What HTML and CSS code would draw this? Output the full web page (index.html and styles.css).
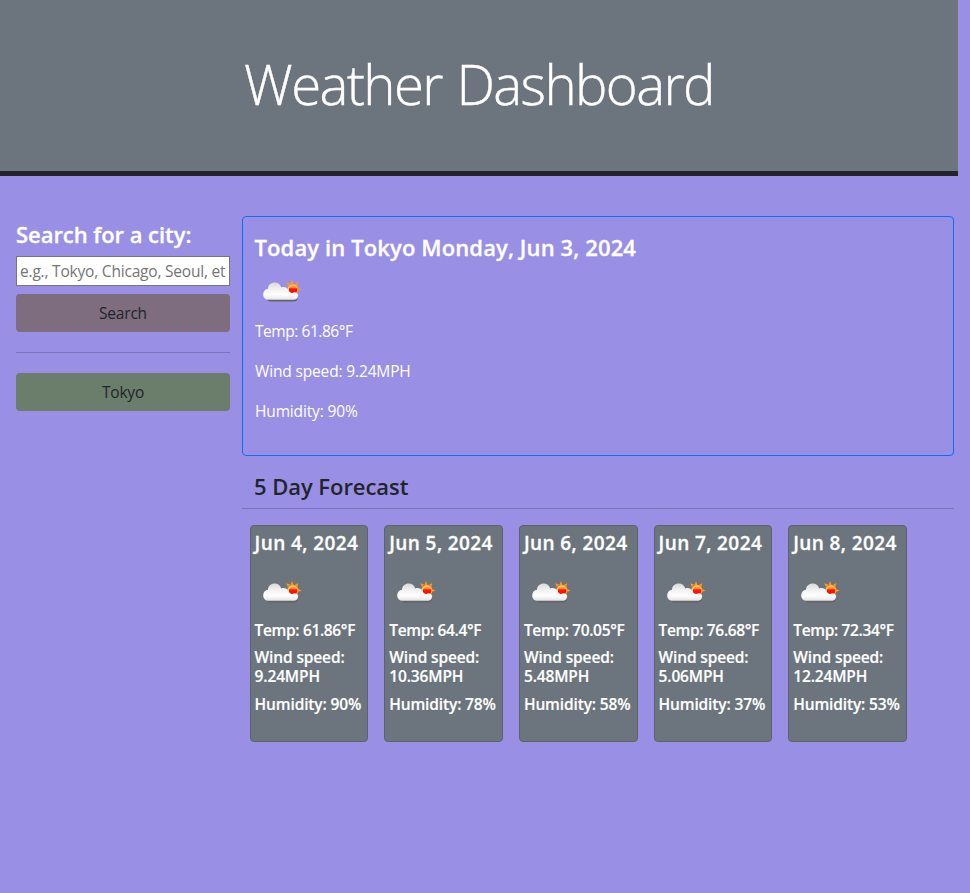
FILE: index.html
```html
<!DOCTYPE html>
<html lang="en">
<head>
<meta charset="utf-8">
<title>Weather Dashboard</title>
<link rel="stylesheet" href="styles.css">
</head>
<body>
<svg width="0" height="0" class="defs" aria-hidden="true">
  <defs>
    <linearGradient id="cloud" x1="0" y1="0" x2="0" y2="1">
      <stop offset="0" stop-color="#dadada"/><stop offset=".35" stop-color="#f0f0f0"/><stop offset=".7" stop-color="#fff"/><stop offset="1" stop-color="#e2e2e2"/>
    </linearGradient>
    <linearGradient id="sun" x1="0" y1="0" x2="0" y2="1">
      <stop offset="0" stop-color="#ffb347"/><stop offset=".25" stop-color="#ff8a2c"/><stop offset=".42" stop-color="#ff1a00"/><stop offset="1" stop-color="#f00"/>
    </linearGradient>
    <symbol id="weather" viewBox="0 0 50 50">
      <path fill="#ff9b16" d="M33 14l1.500 4h-3zM39.300 16l-1 4-2.500-2zM42.700 23.500l-4 1.500v-3zM39.600 29.800l-3.500-1.300 2.300-2.300zM27.200 16.300l4 1.200-2.200 2.500z"/>
      <circle cx="33.800" cy="23.300" r="5.600" fill="#ff9b16"/>
      <circle cx="33.800" cy="23.500" r="4.900" fill="#ffd28a"/>
      <circle cx="34.100" cy="23.600" r="4.300" fill="url(#sun)"/>
      <rect x="8" y="28" width="30.500" height="7.500" rx="3.500" fill="#646266"/>
      <path fill="url(#cloud)" d="M10 33.800C6.500 33.800 4.200 31.600 4.200 28.400c0-3.100 2-5.300 4.800-5.700C9.200 19 12 16.600 15.700 16.600c3.100 0 5.600 1.800 6.500 4.800 3.600-1 7.300.5 8.300 4.700 1.300 1 2.800 1.100 4.500.2 2.500-.2 4 1.300 4 3.300 0 2.700-1.500 4.200-4.300 4.200z"/>
    </symbol>
  </defs>
</svg>
<header class="page-header"><h1>Weather Dashboard</h1></header>
<main class="layout">
  <aside class="sidebar">
    <h2 class="search-title">Search for a city:</h2>
    <input class="city-input" type="text" placeholder="e.g., Tokyo, Chicago, Seoul, etc.">
    <button class="btn btn-search">Search</button>
    <hr>
    <button class="btn btn-city">Tokyo</button>
  </aside>
  <section class="content">
    <div class="today">
      <h2>Today in Tokyo Monday, Jun 3, 2024</h2>
      <svg class="icon"><use href="#weather"/></svg>
      <p class="temp">Temp: 61.86°F</p>
      <p class="wind">Wind speed: 9.24MPH</p>
      <p class="humidity">Humidity: 90%</p>
    </div>
    <h2 class="forecast-title">5 Day Forecast</h2>
    <div class="forecast">
      <article class="card"><h3>Jun 4, 2024</h3><svg class="icon"><use href="#weather"/></svg><p class="temp">Temp: 61.86°F</p><p>Wind speed: 9.24MPH</p><p>Humidity: 90%</p></article>
      <article class="card"><h3>Jun 5, 2024</h3><svg class="icon"><use href="#weather"/></svg><p class="temp">Temp: 64.4°F</p><p>Wind speed: 10.36MPH</p><p>Humidity: 78%</p></article>
      <article class="card"><h3>Jun 6, 2024</h3><svg class="icon"><use href="#weather"/></svg><p class="temp">Temp: 70.05°F</p><p>Wind speed: 5.48MPH</p><p>Humidity: 58%</p></article>
      <article class="card"><h3>Jun 7, 2024</h3><svg class="icon"><use href="#weather"/></svg><p class="temp">Temp: 76.68°F</p><p>Wind speed: 5.06MPH</p><p>Humidity: 37%</p></article>
      <article class="card"><h3>Jun 8, 2024</h3><svg class="icon"><use href="#weather"/></svg><p class="temp">Temp: 72.34°F</p><p>Wind speed: 12.24MPH</p><p>Humidity: 53%</p></article>
    </div>
  </section>
</main>
</body>
</html>
```
FILE: styles.css
```css
* { box-sizing: border-box; }
html { background: #9990e6; }
body { margin: 0; width: 958px; font: 400 15.5px/24px "Open Sans", "Noto Sans", sans-serif; color: #212529; }
h1, h2, h3, p { margin: 0; white-space: nowrap; }
.defs { display: block; height: 0; }
.page-header { height: 176px; padding-top: 50px; background: #6c757d; border-bottom: 5px solid #212529; text-align: center; color: #fff; }
h1 { font-size: 54.5px; line-height: 68px; font-weight: 300; letter-spacing: -1.6px; word-spacing: 2px; -webkit-text-stroke: 0.4px #fff; }
.layout { display: flex; gap: 12px; padding: 40px 4px 0 16px; }
.sidebar { width: 214px; display: flex; flex-direction: column; }
h2 { font-size: 22px; line-height: 28px; font-weight: 600; letter-spacing: -0.05px; }
.search-title, .today h2, h3 { -webkit-text-stroke: 0.3px #fff; }
.search-title { color: #fff; margin: 4px 0 8px; }
.city-input { width: 100%; height: 30px; padding: 1px 3px; border: 1px solid #767676; border-radius: 0; background: #fff; font: inherit; letter-spacing: -0.2px; }
.city-input::placeholder { color: #757575; opacity: 1; }
.btn { height: 38px; border: 0; border-radius: 4px; padding: 0; font: inherit; letter-spacing: -0.2px; color: #212529; }
.btn-search { margin-top: 8px; background: #7e6c7f; }
.btn-city { background: #6b7d6b; }
hr { width: 100%; height: 1px; margin: 20px 0; border: 0; background: #7b75b7; }
.content { width: 712px; }
.today { height: 240px; padding: 16px 12px; border: 1px solid #0d6efd; border-radius: 4px; color: #fff; }
.today h2 { margin-left: -0.5px; letter-spacing: 0.12px; }
.icon { display: block; width: 50px; height: 50px; }
.today .icon { margin: 5px 0 3px 4px; }
.today p { margin-bottom: 16px; letter-spacing: -0.15px; }
.today .temp { letter-spacing: -0.45px; }
.forecast-title { height: 53px; padding: 16px 12px 0; border-bottom: 1px solid #7b75b7; }
.forecast { display: grid; grid-template-columns: repeat(5, 118.660px); gap: 16px; padding: 16px 7.800px; }
.card { height: 217px; padding: 5px 3.800px; background: #6c757d; border: 1px solid #5c6369; border-radius: 4px; color: #fff; }
h3 { font-size: 19px; line-height: 24px; font-weight: 600; letter-spacing: 0.4px; }
.card .icon { margin: 12px 0 4px 4px; }
.card p { margin-bottom: 8px; font-size: 15.500px; line-height: 19.200px; font-weight: 600; letter-spacing: -0.14px; -webkit-text-stroke: 0.15px #fff; white-space: normal; }
.card .temp { letter-spacing: -0.35px; }
```
